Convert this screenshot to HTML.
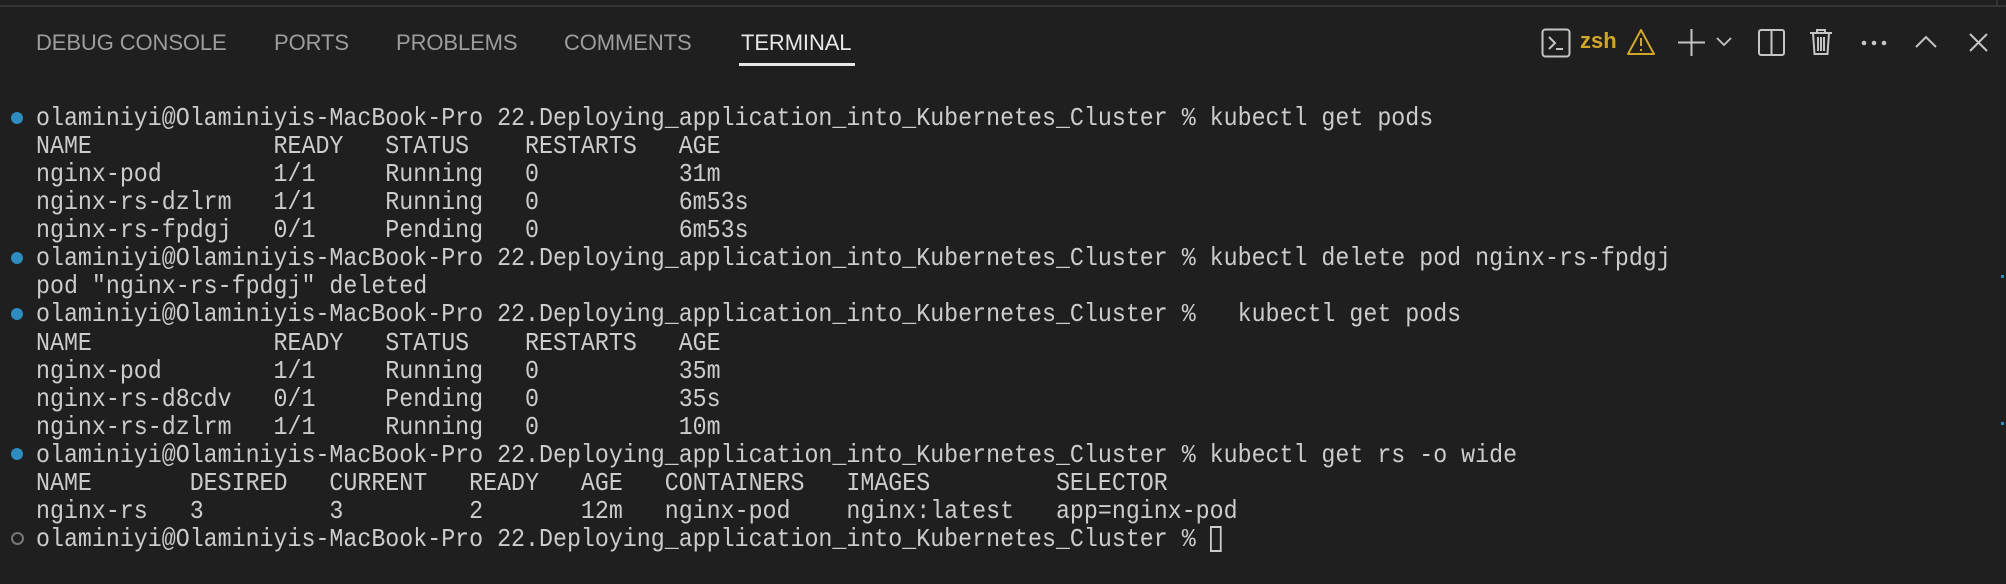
<!DOCTYPE html>
<html><head><meta charset="utf-8"><style>
html,body{margin:0;padding:0;background:#1f1f1f;width:2006px;height:584px;overflow:hidden;position:relative}
.topline{position:absolute;left:0;top:5px;width:2006px;height:2px;background:#353535}
.vline{position:absolute;left:1996px;top:0;width:2px;height:6px;background:#353535}
.tab{position:absolute;top:30px;font-family:"Liberation Sans",sans-serif;font-size:22px;color:#9d9d9d;line-height:26px;letter-spacing:-0.1px}
.tab.act{color:#e7e7e7}
.ul{position:absolute;left:739px;top:63px;width:116px;height:3px;background:#e7e7e7}
.term{position:absolute;left:36.4px;top:104px;font-family:"Liberation Mono",monospace;font-size:26px;line-height:28.06px;color:#cccccc;white-space:pre;transform:scaleX(0.8955);transform-origin:0 0;margin:0}
.dot{position:absolute;left:11px;width:12px;height:12px;border-radius:50%;background:#2f8cbf}
.dot.h{background:none;border:2px solid #777;width:9px;height:9px}
.cur{display:inline-block;width:13px;height:26px;border:2px solid #cccccc;box-sizing:border-box;vertical-align:-6px}
svg{position:absolute}
.zsh{position:absolute;left:1580px;top:28px;font-family:"Liberation Sans",sans-serif;font-size:22px;font-weight:bold;color:#d1a72b}
.tick{position:absolute;left:2001px;width:3px;height:3px;background:#2f8cbf}
</style></head><body>
<div class="topline"></div><div class="vline"></div>
<div class="tab" style="left:36px">DEBUG CONSOLE</div>
<div class="tab" style="left:274px">PORTS</div>
<div class="tab" style="left:396px">PROBLEMS</div>
<div class="tab" style="left:564px">COMMENTS</div>
<div class="tab act" style="left:741px">TERMINAL</div>
<div class="ul"></div>

<svg style="left:1541px;top:28px" width="30" height="30" viewBox="0 0 30 30" fill="none" stroke="#c5c5c5" stroke-width="2"><rect x="1.5" y="1.5" width="27" height="27" rx="3"/><path d="M8 9l6 6-6 6M15 21h7"/></svg>
<div class="zsh">zsh</div>
<svg style="left:1626px;top:28px" width="30" height="28" viewBox="0 0 30 28" fill="none" stroke="#d1a72b" stroke-width="2"><path d="M15 2L28 26H2Z" stroke-linejoin="round"/><path d="M15 10v8M15 21v2"/></svg>
<svg style="left:1678px;top:29px" width="27" height="27" viewBox="0 0 27 27" stroke="#c5c5c5" stroke-width="2"><path d="M13.5 0v27M0 13.5h27"/></svg>
<svg style="left:1716px;top:37px" width="16" height="10" viewBox="0 0 16 10" fill="none" stroke="#c5c5c5" stroke-width="1.8"><path d="M1 1l7 7 7-7"/></svg>
<svg style="left:1758px;top:29px" width="27" height="27" viewBox="0 0 27 27" fill="none" stroke="#c5c5c5" stroke-width="2"><rect x="1" y="1" width="25" height="25" rx="2"/><path d="M13.5 1v25"/></svg>
<svg style="left:1809px;top:28px" width="24" height="28" viewBox="0 0 24 28" fill="none" stroke="#c5c5c5" stroke-width="2"><path d="M1 5h22M8 5V2h8v3M4 5l1.5 21h13L20 5M9 9v14M12 9v14M15 9v14"/></svg>
<svg style="left:1861px;top:40px" width="26" height="6" viewBox="0 0 26 6" fill="#c5c5c5"><circle cx="3" cy="3" r="2.3"/><circle cx="13" cy="3" r="2.3"/><circle cx="23" cy="3" r="2.3"/></svg>
<svg style="left:1915px;top:35px" width="22" height="13" viewBox="0 0 22 13" fill="none" stroke="#c5c5c5" stroke-width="2"><path d="M1 12L11 2l10 10"/></svg>
<svg style="left:1969px;top:33px" width="19" height="19" viewBox="0 0 19 19" stroke="#c5c5c5" stroke-width="2"><path d="M1 1l17 17M18 1L1 18"/></svg>

<div class="dot" style="top:112px"></div>
<div class="dot" style="top:252px"></div>
<div class="dot" style="top:308px"></div>
<div class="dot" style="top:448px"></div>
<div class="dot h" style="top:532px"></div>
<div class="tick" style="top:275px"></div>
<div class="tick" style="top:422px"></div>

<pre class="term">olaminiyi@Olaminiyis-MacBook-Pro 22.Deploying_application_into_Kubernetes_Cluster % kubectl get pods
NAME             READY   STATUS    RESTARTS   AGE
nginx-pod        1/1     Running   0          31m
nginx-rs-dzlrm   1/1     Running   0          6m53s
nginx-rs-fpdgj   0/1     Pending   0          6m53s
olaminiyi@Olaminiyis-MacBook-Pro 22.Deploying_application_into_Kubernetes_Cluster % kubectl delete pod nginx-rs-fpdgj
pod "nginx-rs-fpdgj" deleted
olaminiyi@Olaminiyis-MacBook-Pro 22.Deploying_application_into_Kubernetes_Cluster %   kubectl get pods
NAME             READY   STATUS    RESTARTS   AGE
nginx-pod        1/1     Running   0          35m
nginx-rs-d8cdv   0/1     Pending   0          35s
nginx-rs-dzlrm   1/1     Running   0          10m
olaminiyi@Olaminiyis-MacBook-Pro 22.Deploying_application_into_Kubernetes_Cluster % kubectl get rs -o wide
NAME       DESIRED   CURRENT   READY   AGE   CONTAINERS   IMAGES         SELECTOR
nginx-rs   3         3         2       12m   nginx-pod    nginx:latest   app=nginx-pod
olaminiyi@Olaminiyis-MacBook-Pro 22.Deploying_application_into_Kubernetes_Cluster % <span class="cur"></span></pre>
</body></html>
